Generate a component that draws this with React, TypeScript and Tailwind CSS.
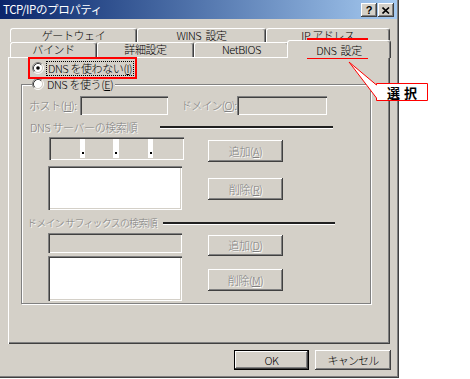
import React from "react";

const Radio = ({ checked }: { checked?: boolean }) => (
  <svg width="12" height="12" viewBox="0 0 12 12" className="shrink-0">
    <circle cx="6" cy="6" r="4.5" fill="#fff" />
    <path d="M2.11 9.89A5.5 5.5 0 0 1 9.89 2.11" stroke="#808080" fill="none" />
    <path d="M9.89 2.11A5.5 5.5 0 0 1 2.11 9.89" stroke="#fff" fill="none" />
    <path d="M2.82 9.18A4.5 4.5 0 0 1 9.18 2.82" stroke="#404040" fill="none" />
    <path d="M9.18 2.82A4.5 4.5 0 0 1 2.82 9.18" stroke="#d4d0c8" fill="none" />
    {checked && <circle cx="6" cy="6" r="1.8" fill="#000" />}
  </svg>
);

const Tab = ({ className, children }: { className: string; children: React.ReactNode }) => (
  <div
    className={`h-full flex items-start justify-center pt-[1px] rounded-t-[3px] border-t border-l border-r border-t-white border-l-white border-r-[#404040] shadow-[inset_-1px_0_0_#808080] bg-[#d4d0c8] ${className}`}
  >
    {children}
  </div>
);

const Btn = ({ className, children }: { className: string; children: React.ReactNode }) => (
  <div
    className={`flex items-center justify-center text-[#808080] [text-shadow:1px_1px_0_#fff] shadow-[inset_-1px_-1px_0_#404040,inset_1px_1px_0_#fff,inset_-2px_-2px_0_#808080,inset_2px_2px_0_#d4d0c8] ${className}`}
  >
    {children}
  </div>
);

const sunken =
  "shadow-[inset_1px_1px_0_#808080,inset_2px_2px_0_#404040,inset_-1px_-1px_0_#fff,inset_-2px_-2px_0_#d4d0c8]";

const Dis = ({ children }: { children: React.ReactNode }) => (
  <span className="text-[#808080] [text-shadow:1px_1px_0_#fff] whitespace-pre">{children}</span>
);

export default function App() {
  return (
    <div className="relative w-[470px] h-[379px] bg-white overflow-hidden [font-family:'Noto_Sans_CJK_JP',sans-serif] font-features-['palt'] font-light text-[11px] tracking-[-0.4px] leading-none text-black">
      <div className="w-[399px] h-[378px] bg-[#d4d0c8] flex flex-col shadow-[inset_-1px_-1px_0_#404040,inset_-2px_-2px_0_#808080]">
        {/* title bar */}
        <div className="h-[19px] mr-[2px] flex items-center bg-linear-to-r from-[#0a246a] to-[#a6caf0] pl-[3px] pr-[3px]">
          <span className="text-white text-[11.5px] font-normal">TCP/IPのプロパティ</span>
          <div className="ml-auto flex gap-[1px] mt-[1px]">
            <div className="w-[16px] h-[14px] bg-[#d4d0c8] flex items-center justify-center font-bold text-[11px] [font-family:'Liberation_Sans',sans-serif] shadow-[inset_-1px_-1px_0_#404040,inset_1px_1px_0_#fff,inset_-2px_-2px_0_#808080]">
              ?
            </div>
            <div className="w-[16px] h-[14px] bg-[#d4d0c8] flex items-center justify-center shadow-[inset_-1px_-1px_0_#404040,inset_1px_1px_0_#fff,inset_-2px_-2px_0_#808080]">
              <svg width="8" height="7" viewBox="0 0 8 7">
                <path d="M0.5 0.5L7 6.5M7 0.5L0.5 6.5" stroke="#000" strokeWidth="1.6" />
              </svg>
            </div>
          </div>
        </div>

        {/* tabs row 1 */}
        <div className="mt-[9px] ml-[10px] flex h-[14px]">
          <Tab className="w-[127px]">ゲートウェイ</Tab>
          <Tab className="w-[129px] whitespace-pre">WINS  設定</Tab>
          <Tab className="w-[124px]">IP アドレス</Tab>
        </div>
        {/* tabs row 2 */}
        <div className="ml-[10px] flex items-end h-[15px]">
          <Tab className="w-[87px]">バインド</Tab>
          <Tab className="w-[97px]">詳細設定</Tab>
          <Tab className="w-[95px]">NetBIOS</Tab>
          <div className="w-[104px] h-[18px] -ml-[2px] -mb-[1px] relative z-10 bg-[#d4d0c8] flex items-start justify-center pt-[4px] rounded-t-[3px] border-t border-l border-r border-t-white border-l-white border-r-[#404040] shadow-[inset_-1px_0_0_#808080] whitespace-pre">
            DNS  設定
          </div>
        </div>

        {/* panel */}
        <div className="ml-[8px] w-[382px] h-[287px] flex flex-col shadow-[inset_1px_1px_0_#fff,inset_-1px_-1px_0_#404040,inset_-2px_-2px_0_#808080]">
          <div className="mt-[5px] ml-[24px] flex items-center h-[12px] gap-[3px]">
            <Radio checked />
            <span className="outline outline-1 outline-dotted outline-black px-[1px] py-[1px] whitespace-nowrap">
              DNS を使わない(<u>I</u>)
            </span>
          </div>

          {/* group box */}
          <div className="mt-[10px] ml-[13px] w-[350px] h-[220px] relative border border-[#808080] shadow-[1px_1px_0_#fff,inset_1px_1px_0_#fff] flex flex-col">
            <div className="absolute left-[10px] -top-[7px] flex items-center gap-[3px] bg-[#d4d0c8] pr-[2px] h-[12px]">
              <Radio />
              <span className="whitespace-nowrap">
                DNS を使う(<u>E</u>)
              </span>
            </div>

            {/* host row */}
            <div className="mt-[11px] flex items-center h-[19px]">
              <div className="ml-[7px] w-[51px]">
                <Dis>
                  ホスト(<u>H</u>):
                </Dis>
              </div>
              <div className={`w-[88px] h-full bg-[#d4d0c8] ${sunken}`} />
              <div className="ml-[13px] w-[56px] tracking-[-0.8px]">
                <Dis>
                  ドメイン(<u>O</u>):
                </Dis>
              </div>
              <div className={`w-[90px] h-full bg-[#d4d0c8] ${sunken}`} />
            </div>

            {/* label row 1 */}
            <div className="mt-[5px] h-[14px] flex items-center">
              <div className="ml-[8px] w-[130px]">
                <Dis>DNS サーバーの検索順</Dis>
              </div>
              <div className="w-[173px] h-[2px] bg-[#202020] shadow-[0_1px_0_#fff] -mt-[1px]" />
            </div>

            {/* block 1 */}
            <div className="mt-[3px] flex">
              <div className="ml-[26px] w-[136px] flex flex-col">
                <div className={`ml-[1px] w-[135px] h-[23px] bg-[#d4d0c8] flex p-[2px] ${sunken}`}>
                  <div className="w-[29px] h-full" />
                  <div className="w-[5px] h-full bg-white flex items-end justify-center pb-[4px]">
                    <div className="w-[2px] h-[2px] bg-black" />
                  </div>
                  <div className="w-[28px] h-full" />
                  <div className="w-[6px] h-full bg-white flex items-end justify-center pb-[4px]">
                    <div className="w-[2px] h-[2px] bg-black" />
                  </div>
                  <div className="w-[29px] h-full" />
                  <div className="w-[5px] h-full bg-white flex items-end justify-center pb-[4px]">
                    <div className="w-[2px] h-[2px] bg-black" />
                  </div>
                  <div className="w-[29px] h-full" />
                </div>
                <div className={`mt-[6px] w-[134px] h-[44px] bg-white ${sunken}`} />
              </div>
              <div className="ml-[24px] pt-[3px] flex flex-col">
                <Btn className="w-[75px] h-[22px]">
                  追加(<u>A</u>)
                </Btn>
                <Btn className="mt-[16px] w-[75px] h-[22px]">
                  削除(<u>R</u>)
                </Btn>
              </div>
            </div>

            {/* label row 2 */}
            <div className="mt-[6px] h-[14px] flex items-center">
              <div className="ml-[5px] w-[136px] text-[10px] tracking-[-0.8px]">
                <Dis>ドメイン サフィックスの検索順</Dis>
              </div>
              <div className="w-[172px] h-[2px] bg-[#202020] shadow-[0_1px_0_#fff]" />
            </div>

            {/* block 2 */}
            <div className="mt-[3px] flex">
              <div className="ml-[26px] w-[136px] flex flex-col">
                <div className={`w-[134px] h-[20px] bg-[#d4d0c8] ${sunken}`} />
                <div className={`mt-[3px] w-[134px] h-[45px] bg-white ${sunken}`} />
              </div>
              <div className="ml-[24px] pt-[2px] flex flex-col">
                <Btn className="w-[75px] h-[21px]">
                  追加(<u>D</u>)
                </Btn>
                <Btn className="mt-[13px] w-[75px] h-[22px]">
                  削除(<u>M</u>)
                </Btn>
              </div>
            </div>
          </div>
        </div>

        {/* bottom buttons */}
        <div className="mt-[6px] ml-[234px] flex">
          <div className="w-[75px] h-[20px] border border-black flex items-center justify-center shadow-[inset_-1px_-1px_0_#404040,inset_1px_1px_0_#fff,inset_-2px_-2px_0_#808080]">
            OK
          </div>
          <div className="ml-[6px] w-[76px] h-[20px] flex items-center justify-center tracking-[-0.8px] shadow-[inset_-1px_-1px_0_#404040,inset_1px_1px_0_#fff,inset_-2px_-2px_0_#808080,inset_2px_2px_0_#d4d0c8]">
            キャンセル
          </div>
        </div>
      </div>

      {/* annotations */}
      <div className="absolute left-[28px] top-[57px] w-[109px] h-[22px] border-2 border-[#ff0000]" />
      <div className="absolute left-[307px] top-[38px] w-[61px] h-[21px] border-2 border-[#ff0000]" />
      <svg className="absolute left-0 top-0" width="470" height="379" viewBox="0 0 470 379">
        <polygon
          points="376.5,83.5 427.5,83.5 427.5,100.5 376.5,100.5 376.5,98 349,62 376.5,85"
          fill="#fff"
          stroke="#ff0000"
          strokeWidth="1"
        />
      </svg>
      <div className="absolute left-[377px] top-[84px] w-[50px] h-[16px] flex items-center justify-center text-[13px] font-bold tracking-[4px] pl-[4px]">
        選択
      </div>
    </div>
  );
}
